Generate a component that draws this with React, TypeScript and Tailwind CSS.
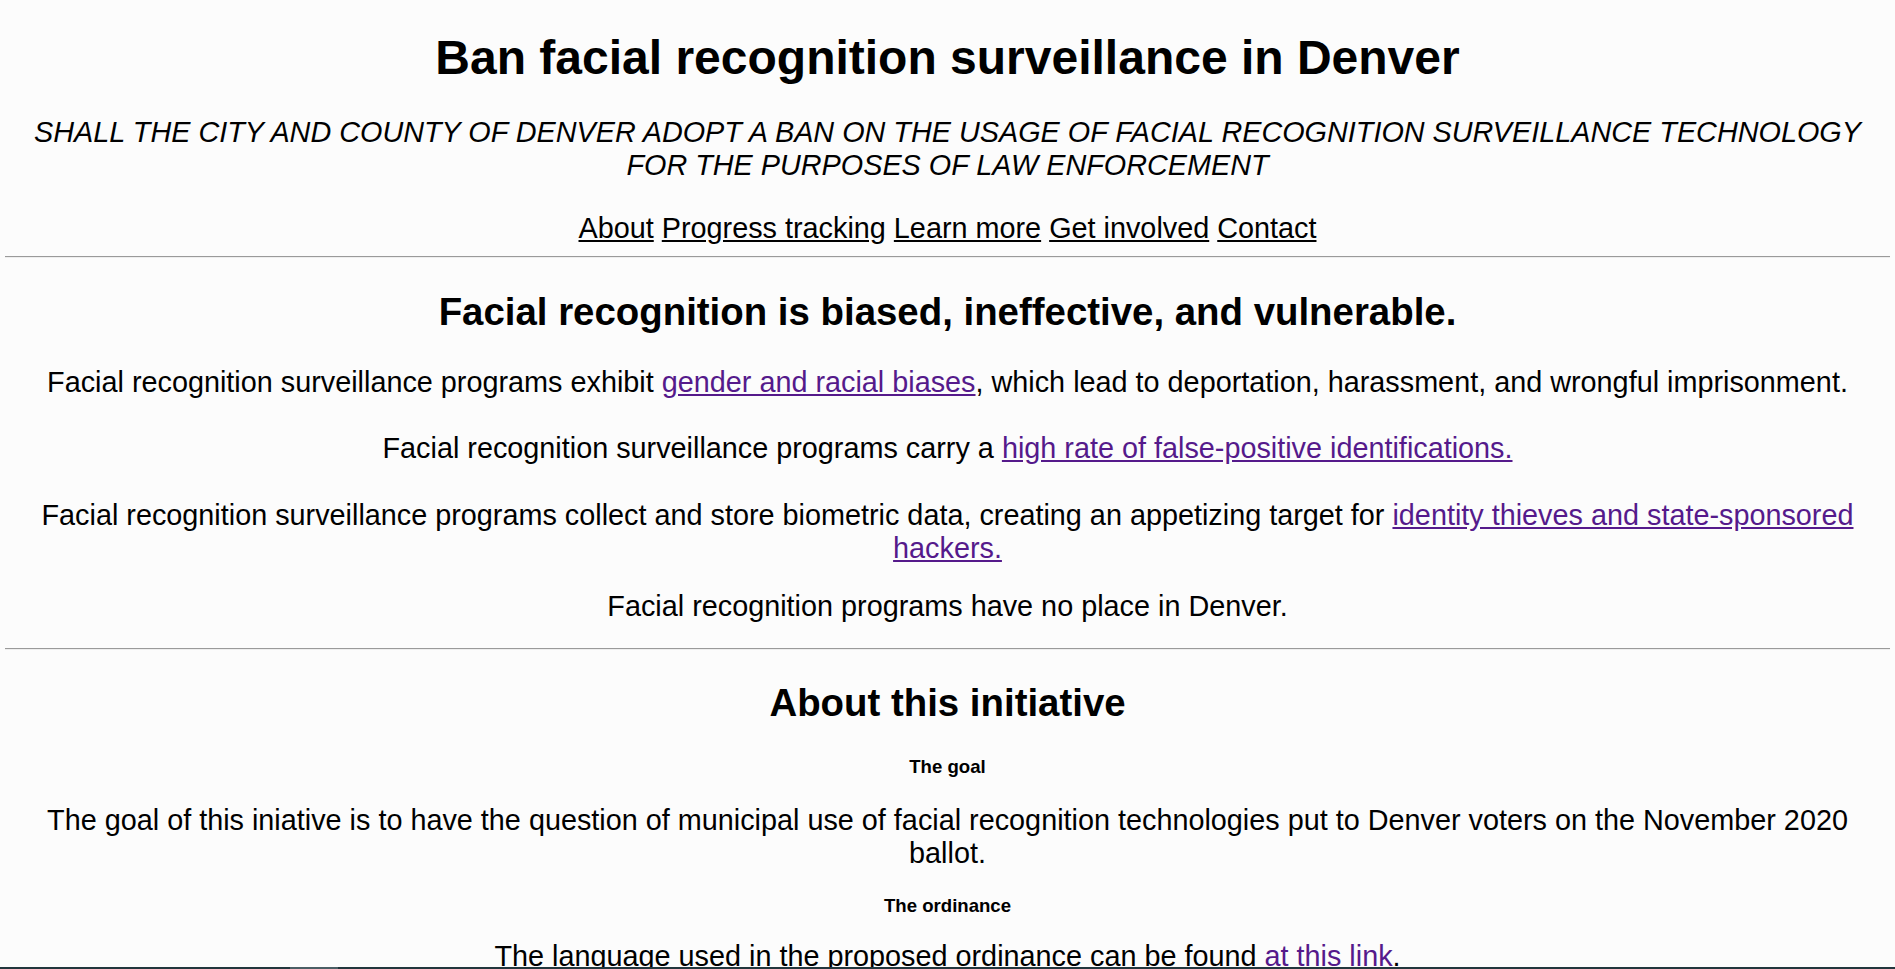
import React from "react";

const linkCls = "text-[#551a8b] underline";
const navCls = "text-black underline";

export default function App() {
  return (
    <div
      className="min-h-[969px] bg-[#fcfcfc] px-[5px] pt-px text-center text-black"
      style={{ fontFamily: '"Liberation Sans", Arial, sans-serif' }}
    >
      <h1 className="mt-[29px] text-[48px] font-bold leading-[55px]">
        Ban facial recognition surveillance in Denver
      </h1>
      <p className="mt-[31px] text-[28.8px] italic leading-[33px]">
        SHALL THE CITY AND COUNTY OF DENVER ADOPT A BAN ON THE USAGE OF FACIAL RECOGNITION SURVEILLANCE TECHNOLOGY FOR THE
        PURPOSES OF LAW ENFORCEMENT
      </p>
      <nav className="mt-[30px] text-[28.8px] leading-[33px]">
        <a href="#about" className={navCls}>About</a>{" "}
        <a href="#progress" className={navCls}>Progress tracking</a>{" "}
        <a href="#learn" className={navCls}>Learn more</a>{" "}
        <a href="#involved" className={navCls}>Get involved</a>{" "}
        <a href="#contact" className={navCls}>Contact</a>
      </nav>
      <hr className="mt-[11px] h-0 border-t border-b border-t-[#9a9a9a] border-b-[#eeeeee]" />
      <h2 className="mt-[32px] text-[38.4px] font-bold leading-[44px]">
        Facial recognition is biased, ineffective, and vulnerable.
      </h2>
      <p className="mt-[32px] text-[28.8px] leading-[33px]">
        Facial recognition surveillance programs exhibit{" "}
        <a href="#a" className={linkCls}>gender and racial biases</a>, which lead to deportation, harassment, and wrongful
        imprisonment.
      </p>
      <p className="mt-[33px] text-[28.8px] leading-[33px]">
        Facial recognition surveillance programs carry a{" "}
        <a href="#b" className={linkCls}>high rate of false-positive identifications.</a>
      </p>
      <p className="mt-[34px] text-[28.8px] leading-[33px]">
        Facial recognition surveillance programs collect and store biometric data, creating an appetizing target for{" "}
        <a href="#c" className={linkCls}>identity thieves and state-sponsored hackers.</a>
      </p>
      <p className="mt-[25px] text-[28.8px] leading-[33px]">Facial recognition programs have no place in Denver.</p>
      <hr className="mt-[25px] h-0 border-t border-b border-t-[#9a9a9a] border-b-[#eeeeee]" />
      <h2 className="mt-[31px] text-[38.4px] font-bold leading-[44px]">About this initiative</h2>
      <h5 className="mt-[31px] text-[18.6px] font-bold leading-[21px]">The goal</h5>
      <p className="mt-[27px] text-[28.8px] leading-[33px]">
        The goal of this iniative is to have the question of municipal use of facial recognition technologies put to
        Denver voters on the November 2020 ballot.
      </p>
      <h5 className="mt-[25px] text-[18.6px] font-bold leading-[21px]">The ordinance</h5>
      <p className="mt-[24px] text-[28.8px] leading-[33px]">
        The language used in the proposed ordinance can be found{" "}
        <a href="#d" className={linkCls}>at this link</a>.
      </p>
      <div className="h-[40px]" />
      <div className="fixed bottom-0 left-0 right-0 flex h-[2px] bg-[#22363d]">
        <div className="ml-[290px] h-full w-[48px] bg-[#4b5e65]" />
      </div>
    </div>
  );
}
